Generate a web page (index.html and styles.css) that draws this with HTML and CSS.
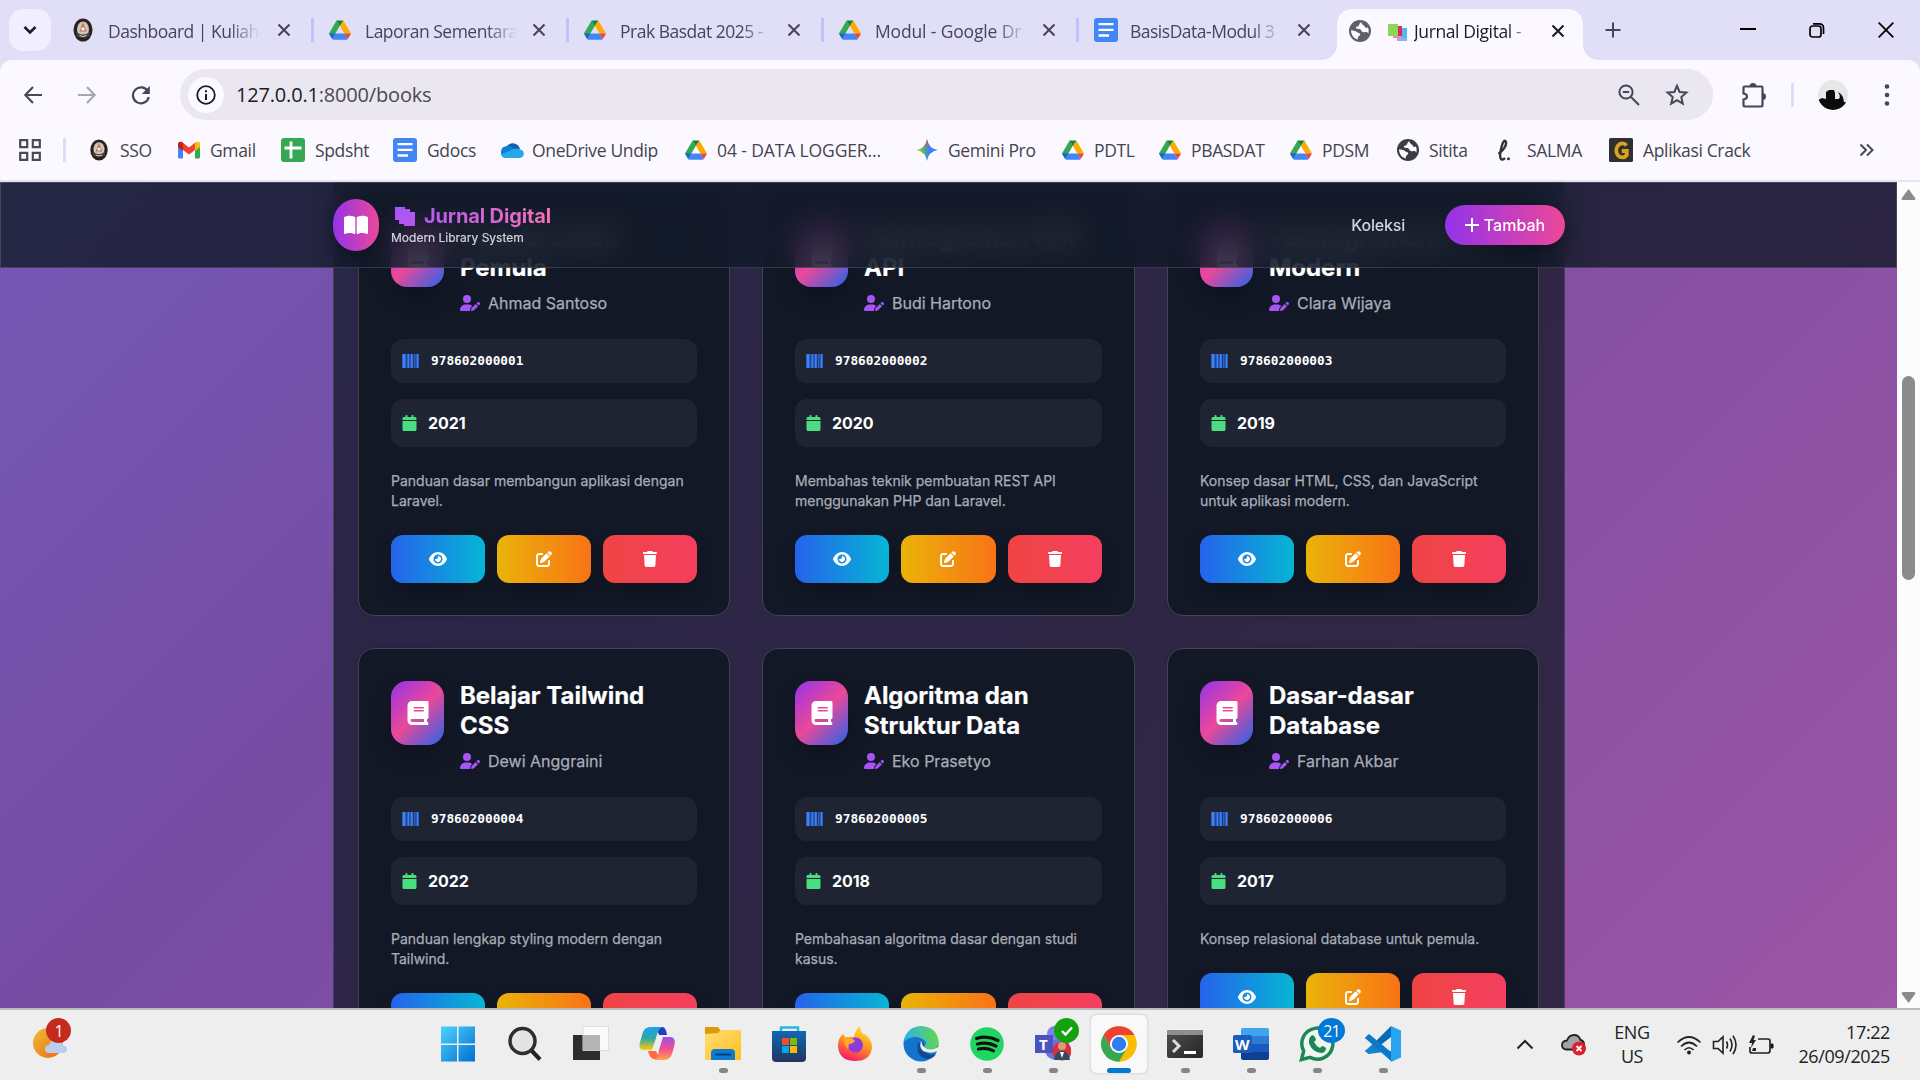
FILE: index.html
```html
<!DOCTYPE html>
<html lang="id">
<head>
<meta charset="utf-8">
<title>Jurnal Digital</title>
<link rel="stylesheet" href="styles.css">
</head>
<body>
<svg width="0" height="0" class="defs" aria-hidden="true">
  <defs>
    <linearGradient id="gWin" x1="0" y1="0" x2="1" y2="1"><stop offset="0" stop-color="#4fd3ff"/><stop offset="1" stop-color="#0070cf"/></linearGradient>
    <linearGradient id="gFolder" x1="0" y1="0" x2="1" y2="1"><stop offset="0" stop-color="#ffdf75"/><stop offset="1" stop-color="#ffbe1c"/></linearGradient>
    <linearGradient id="gStore" x1="0" y1="0" x2="0" y2="1"><stop offset="0" stop-color="#0f68b5"/><stop offset="1" stop-color="#22355d"/></linearGradient>
    <linearGradient id="gFox" x1=".7" y1="0" x2=".3" y2="1"><stop offset="0" stop-color="#ffe226"/><stop offset=".45" stop-color="#ff9a1f"/><stop offset="1" stop-color="#f5156c"/></linearGradient>
    <linearGradient id="gCopA" x1="0" y1="0" x2="0" y2="1"><stop offset="0" stop-color="#1ba3ee"/><stop offset=".5" stop-color="#2fa8a0"/><stop offset="1" stop-color="#ffcf0a"/></linearGradient>
    <linearGradient id="gCopB" x1="0" y1="0" x2="0" y2="1"><stop offset="0" stop-color="#9d50ef"/><stop offset=".5" stop-color="#ef4d8f"/><stop offset="1" stop-color="#ffa14e"/></linearGradient>
    <linearGradient id="gEdge" x1="0" y1=".5" x2="1" y2=".4"><stop offset="0" stop-color="#29b1ea"/><stop offset="1" stop-color="#62d84e"/></linearGradient>
    <linearGradient id="gGem" x1="0" y1=".5" x2="1" y2=".5"><stop offset="0" stop-color="#f5c41c"/><stop offset=".35" stop-color="#4fb070"/><stop offset=".6" stop-color="#3b84f6"/><stop offset="1" stop-color="#3b84f6"/></linearGradient>
    <linearGradient id="gSun" x1="0" y1="0" x2="1" y2="1"><stop offset="0" stop-color="#e9bf3e"/><stop offset="1" stop-color="#f3650b"/></linearGradient>
    <linearGradient id="gTerm" x1="0" y1="0" x2="1" y2="1"><stop offset="0" stop-color="#505050"/><stop offset="1" stop-color="#252525"/></linearGradient>
    <linearGradient id="gStack" x1="0" y1="0" x2="1" y2="1"><stop offset="0" stop-color="#a855f7"/><stop offset="1" stop-color="#b757ee"/></linearGradient>
  </defs>
  <symbol id="drive" viewBox="0 0 22 22"><path fill="#34a853" d="M7.6 1.5 0 14.5l3.2 5.6L11 6.5z"/><path fill="#188038" d="M7.6 1.5h6.8L11 7z"/><path fill="#fbab04" d="M14.4 1.5 22 14.5h-6.6L11 7z"/><path fill="#4285f4" d="M3.2 20.1 6.6 14.5h8.8l3.4 5.6-.9.6H4z"/><path fill="#1967d2" d="M0 14.5h6.6l-3.4 5.6z"/><path fill="#ea4335" d="M22 14.5h-6.6l3.4 5.6z"/></symbol>
  <symbol id="docs" viewBox="0 0 24 24"><rect width="24" height="24" rx="3" fill="#4285f4"/><path stroke="#fff" stroke-width="2.3" d="M4.500 6.200h15M4.500 11.800h15M4.500 17.500h10.500"/></symbol>
  <symbol id="seal" viewBox="0 0 20 24"><ellipse cx="10" cy="12" rx="9.500" ry="11.500" fill="#2a211e"/><ellipse cx="10" cy="11.500" rx="6" ry="8" fill="#cfc5bb"/><path d="M10 4l3.500 9.500h-7z" fill="#c27560"/><path d="M3.500 14q6.500 5 13 0v4q-6.500 4-13 0z" fill="#46403b"/><path d="M6.500 17.500q3.500 2 7 0" fill="none" stroke="#ddd" stroke-width="1"/><circle cx="10" cy="11" r="1.800" fill="#f4efe8"/></symbol>
  <symbol id="globe" viewBox="0 0 22 22"><circle cx="11" cy="11" r="11" fill="currentColor"/><path fill="#fbf9ff" d="M12.500 2.200c-1.800.6-2 1.800-2.600 3.200-.8 1.300-3 .6-3 2.300 0 1.500 2.600 1 3.900 1.300 1.800.6 1.300 2.600 2.800 3.100 1.600.4 2.800-.6 4.200 0 .9.500 1.100 1.200 1.400 1.600.6-2 .8-4.700-.5-6.500-.7 1-2.400.9-2.700-.3-.3-1.600-3.600-2.100-3.500-4.700zM2 10.200c1.800.3 4.600.4 6 1.800 1.200 1.300 2.900.8 3.200 2.300.2 1.500-1.800 1.700-2.200 3-.2.900-.3 1.700-.1 2.300C4.800 18.400 2 15 2 10.200z"/></symbol>
  <symbol id="x" viewBox="0 0 14 14"><path d="M1.500 1.500l11 11M12.500 1.500l-11 11" stroke="currentColor" stroke-width="2.100" fill="none"/></symbol>
  <symbol id="book" viewBox="0 0 448 512"><path fill="currentColor" d="M96 0C43 0 0 43 0 96V416c0 53 43 96 96 96H384h32c17.700 0 32-14.300 32-32s-14.300-32-32-32V384c17.700 0 32-14.300 32-32V32c0-17.700-14.300-32-32-32H384 96zm0 384H352v64H96c-17.700 0-32-14.300-32-32s14.300-32 32-32zm32-240c0-8.800 7.200-16 16-16H336c8.800 0 16 7.200 16 16s-7.200 16-16 16H144c-8.800 0-16-7.200-16-16zm16 48H336c8.800 0 16 7.200 16 16s-7.200 16-16 16H144c-8.800 0-16-7.200-16-16s7.200-16 16-16z"/></symbol>
  <symbol id="user" viewBox="0 0 640 512"><path fill="currentColor" d="M224 256A128 128 0 1 0 224 0a128 128 0 1 0 0 256zm-45.700 48C79.800 304 0 383.800 0 482.300C0 498.700 13.300 512 29.700 512H322.800c-3.100-8.800-3.700-18.400-1.400-27.800l15-60.100c2.800-11.300 8.600-21.500 16.800-29.700l40.300-40.300c-32.100-31-75.700-50.100-123.900-50.100H178.300zm435.500-68.300c-15.600-15.600-40.900-15.600-56.600 0l-29.400 29.400 71 71 29.400-29.400c15.600-15.600 15.600-40.900 0-56.600l-14.400-14.400zM375.900 417c-4.100 4.100-7 9.200-8.400 14.900l-15 60.100c-1.400 5.500 .2 11.200 4.200 15.200s9.700 5.600 15.200 4.200l60.100-15c5.600-1.400 10.800-4.300 14.900-8.400L576.100 358.700l-71-71L375.900 417z"/></symbol>
  <symbol id="bars" viewBox="0 0 17 14"><path fill="#2d5fc4" d="M0 0h17v14H0z"/><path fill="#3b82f6" d="M1 0h2v14H1zM6 0h1v14H6zM9 0h1.500v14H9zM15 0h1v14h-1z"/><path fill="#1f3156" d="M4.200 0h.5v14h-.5zM7.700 0h.5v14h-.5zM11.200 0h.8v14h-.8zM13.600 0h.5v14h-.5z"/></symbol>
  <symbol id="cal" viewBox="0 0 448 512"><path fill="currentColor" d="M96 32V64H48C21.500 64 0 85.500 0 112v48H448V112c0-26.500-21.500-48-48-48H352V32c0-17.700-14.300-32-32-32s-32 14.300-32 32V64H160V32c0-17.700-14.300-32-32-32S96 14.300 96 32zM448 192H0V464c0 26.500 21.500 48 48 48H400c26.500 0 48-21.500 48-48V192z"/></symbol>
  <symbol id="eye" viewBox="0 0 576 512"><path fill="currentColor" d="M288 32c-80.800 0-145.500 36.800-192.600 80.600C48.600 156 17.300 208 2.500 243.700c-3.300 7.900-3.300 16.700 0 24.600C17.300 304 48.600 356 95.400 399.400C142.500 443.200 207.200 480 288 480s145.500-36.800 192.600-80.600c46.800-43.500 78.100-95.400 93-131.100c3.300-7.900 3.300-16.700 0-24.600c-14.900-35.700-46.200-87.700-93-131.100C433.500 68.800 368.800 32 288 32zM144 256a144 144 0 1 1 288 0 144 144 0 1 1 -288 0zm144-64c0 35.300-28.700 64-64 64c-7.100 0-13.900-1.200-20.300-3.300c-5.500-1.800-11.900 1.600-11.700 7.400c.3 6.900 1.300 13.800 3.200 20.700c13.700 51.200 66.400 81.600 117.600 67.900s81.600-66.400 67.900-117.600c-11.100-41.500-47.800-69.400-88.600-71.100c-5.800-.2-9.200 6.100-7.400 11.700c2.100 6.400 3.300 13.200 3.300 20.300z"/></symbol>
  <symbol id="pen" viewBox="0 0 512 512"><path fill="currentColor" d="M471.600 21.700c-21.900-21.900-57.300-21.900-79.200 0L362.300 51.700l97.900 97.900 30.100-30.100c21.900-21.900 21.900-57.300 0-79.200L471.600 21.700zm-299.200 220c-6.100 6.100-10.800 13.600-13.500 21.900l-29.600 88.800c-2.900 8.600-.6 18.100 5.800 24.600s15.900 8.700 24.600 5.800l88.800-29.600c8.200-2.700 15.700-7.400 21.900-13.500L437.700 172.300 339.700 74.300 172.400 241.700zM96 64C43 64 0 107 0 160V416c0 53 43 96 96 96H352c53 0 96-43 96-96V320c0-17.700-14.300-32-32-32s-32 14.300-32 32v96c0 17.700-14.300 32-32 32H96c-17.700 0-32-14.300-32-32V160c0-17.700 14.300-32 32-32h96c17.700 0 32-14.300 32-32s-14.300-32-32-32H96z"/></symbol>
  <symbol id="trash" viewBox="0 0 448 512"><path fill="currentColor" d="M135.200 17.700L128 32H32C14.300 32 0 46.300 0 64S14.300 96 32 96H416c17.700 0 32-14.300 32-32s-14.300-32-32-32H320l-7.200-14.300C307.400 6.800 296.300 0 284.200 0H163.800c-12.100 0-23.200 6.800-28.600 17.700zM416 128H32L53.200 467c1.600 25.300 22.600 45 47.900 45H346.900c25.300 0 46.300-19.700 47.900-45L416 128z"/></symbol>
</svg>

<div class="tabstrip">
  <div class="tabmenu"><svg width="14" height="10" viewBox="0 0 14 10"><path d="M1.500 2l5.500 5.500L12.500 2" fill="none" stroke="#1c1b24" stroke-width="2.600"/></svg></div>
  <div class="tabs">
    <div class="tab"><svg class="fav"><use href="#seal"/></svg><span class="tt">Dashboard | Kuliah</span><svg class="cl"><use href="#x"/></svg></div>
    <div class="tab"><svg class="fav"><use href="#drive"/></svg><span class="tt">Laporan Sementara</span><svg class="cl"><use href="#x"/></svg></div>
    <div class="tab"><svg class="fav"><use href="#drive"/></svg><span class="tt">Prak Basdat 2025 -</span><svg class="cl"><use href="#x"/></svg></div>
    <div class="tab"><svg class="fav"><use href="#drive"/></svg><span class="tt wide">Modul - Google Dr</span><svg class="cl"><use href="#x"/></svg></div>
    <div class="tab last"><svg class="fav big"><use href="#docs"/></svg><span class="tt">BasisData-Modul 3</span><svg class="cl"><use href="#x"/></svg></div>
  </div>
  <div class="active-tab">
    <svg class="fav"><use href="#globe"/></svg>
    <svg class="emo" width="19" height="18" viewBox="0 0 19 18"><path fill="#52b8f2" d="M9 4h10v13H9z"/><path fill="#8cb3ef" d="M9 14h10v3H9z"/><path fill="#d62d5c" d="M5 2h9v12H5z"/><path fill="#ef8aa5" d="M5 12h9v2H5z"/><path fill="#8ed65a" d="M0 0h10v12H0z"/></svg>
    <span class="tt">Jurnal Digital -</span><svg class="cl"><use href="#x"/></svg>
  </div>
  <svg class="plus" width="16" height="16" viewBox="0 0 16 16"><path d="M8 .5v15M.5 8h15" stroke="#474559" stroke-width="2"/></svg>
  <div class="winbtns">
    <svg width="16" height="16" viewBox="0 0 16 16"><path d="M0 7h16" stroke="#000" stroke-width="2"/></svg>
    <svg width="16" height="16" viewBox="0 0 16 16"><rect x="1" y="4" width="11" height="11" rx="2.500" fill="none" stroke="#000" stroke-width="1.700"/><path d="M4 1.800h6.500a4 4 0 0 1 4 4V12" fill="none" stroke="#000" stroke-width="1.700"/></svg>
    <svg width="16" height="16" viewBox="0 0 16 16"><path d="M.7.7l14.600 14.600M15.300.7.7 15.300" stroke="#000" stroke-width="1.800"/></svg>
  </div>
</div>

<div class="chrome">
  <div class="toolbar">
    <div class="nav">
      <svg width="20" height="20" viewBox="0 0 20 20"><path d="M10 2 2.300 10 10 18M2.500 10H19" fill="none" stroke="#474559" stroke-width="2.100"/></svg>
      <svg width="20" height="20" viewBox="0 0 20 20"><path d="M10 2l7.700 8L10 18M17.500 10H1" fill="none" stroke="#a9a6b3" stroke-width="2.100"/></svg>
      <svg width="20" height="20" viewBox="0 0 20 20"><path d="M17 6.500A8 8 0 1 0 17.800 12" fill="none" stroke="#474559" stroke-width="2.200"/><path d="M18.800 1v8h-8z" fill="#474559"/></svg>
    </div>
    <div class="omni">
      <div class="info"><svg width="20" height="20" viewBox="0 0 20 20"><circle cx="10" cy="10" r="8.800" fill="none" stroke="#1d1b22" stroke-width="1.800"/><path d="M10 9v6M10 5.200v2" stroke="#1d1b22" stroke-width="2"/></svg></div>
      <span class="url"><b>127.0.0.1</b>:8000/books</span>
      <svg class="mag" width="22" height="22" viewBox="0 0 22 22"><circle cx="8" cy="8" r="6.600" fill="none" stroke="#474559" stroke-width="2"/><path d="M13 13l8 8M4.800 8h6.400" stroke="#474559" stroke-width="2"/></svg>
      <svg class="star" width="24" height="24" viewBox="0 0 24 24"><path d="M12 2.800l2.600 6.200 6.800.6-5.100 4.500 1.500 6.600L12 17.200l-5.800 3.500 1.500-6.600L2.600 9.600 9.400 9z" fill="none" stroke="#474559" stroke-width="2"/></svg>
    </div>
    <svg class="ext" width="26" height="26" viewBox="0 0 26 26"><path d="M2.500 5.500q0-1 1-1h17q1 0 1 1v18q0 1-1 1h-17q-1 0-1-1v-6q3.500-.5 3.500-3t-3.500-3z" fill="none" stroke="#474559" stroke-width="2.200"/><path d="M8.500 4.500a3.500 3.500 0 0 1 7 0zM21.500 11a3.500 3.500 0 0 1 0 7z" fill="#474559"/></svg>
    <i class="tsep"></i>
    <svg class="ava" width="30" height="30" viewBox="0 0 30 30"><clipPath id="cc"><circle cx="15" cy="15" r="15"/></clipPath><g clip-path="url(#cc)"><path fill="#e7e6e8" d="M0 0h30v30H0z"/><path fill="#0c0a0a" d="M0 20l4-2 4 1V12l3-2h5l1 3v6h4q2-3-1-7 5 2 6 10l4 1v7H0z"/></g></svg>
    <svg class="dots" width="6" height="22" viewBox="0 0 6 22"><g fill="#474559"><circle cx="3" cy="2.500" r="2.300"/><circle cx="3" cy="11" r="2.300"/><circle cx="3" cy="19.500" r="2.300"/></g></svg>
  </div>
  <div class="marks">
    <svg class="apps" width="22" height="22" viewBox="0 0 22 22"><path d="M1.200 1.200h7v7h-7zM13.800 1.200h7v7h-7zM1.200 13.800h7v7h-7zM13.800 13.800h7v7h-7z" fill="none" stroke="#4a4852" stroke-width="2.200"/></svg>
    <i></i>
    <div class="bm"><svg><use href="#seal"/></svg>SSO</div>
    <div class="bm"><svg viewBox="0 0 22 22"><path fill="#4285f4" d="M0 6h5v13.500H1.500Q0 19.500 0 18z"/><path fill="#34a853" d="M17 6h5v12q0 1.500-1.500 1.500H17z"/><path fill="#ea4335" d="M0 5q.5-3 4-2l7 5.500L18 3l-1 8-6 4.500L5 11z"/><path fill="#fbbc04" d="M17 3.800q5-2.500 5 1.200v3l-5 4z"/><path fill="#c5221f" d="M0 5q.5-3 4-2l1 1v8L0 8z"/></svg>Gmail</div>
    <div class="bm"><svg class="w"><rect width="24" height="24" rx="3" fill="#34a853"/><path stroke="#fff" stroke-width="2.800" d="M3.500 10h17M10 3.500v17"/></svg>Spdsht</div>
    <div class="bm"><svg class="w"><use href="#docs"/></svg>Gdocs</div>
    <div class="bm od-bm"><svg class="w" viewBox="0 0 24 24"><path fill="#0a64b4" d="M7 8a7.500 7.500 0 0 1 13 3l-6 6z"/><path fill="#0f80d7" d="M5.500 20A6 6 0 0 1 5 8.500q4-2 8 1.500l5 4z"/><path fill="#28a8ea" d="M5 20q-3-.5-4-3.500L14 11q3-1 5 0c7 1 6 9 0 9z"/></svg>OneDrive Undip</div>
    <div class="bm log"><svg><use href="#drive"/></svg>04 - DATA LOGGER...</div>
    <div class="bm"><svg viewBox="0 0 22 22"><path fill="url(#gGem)" d="M11 0q1.500 9.500 11 11-9.500 1.500-11 11-1.500-9.500-11-11 9.500-1.500 11-11z"/><path fill="#ef5350" opacity=".75" d="M11 0q.5 4 2.500 7h-5Q10.500 4 11 0z"/></svg>Gemini Pro</div>
    <div class="bm"><svg><use href="#drive"/></svg>PDTL</div>
    <div class="bm"><svg><use href="#drive"/></svg>PBASDAT</div>
    <div class="bm"><svg><use href="#drive"/></svg>PDSM</div>
    <div class="bm dark"><svg><use href="#globe"/></svg>Sitita</div>
    <div class="bm"><svg viewBox="0 0 22 22"><path d="M3.500 15Q12 8 11 3 9-1 6.500 8T6 20q2 1.500 4-1" fill="none" stroke="#333" stroke-width="2.400"/><circle cx="13.500" cy="19.800" r="1.500" fill="#333"/></svg>SALMA</div>
    <div class="bm"><svg class="w" viewBox="0 0 24 24"><rect width="24" height="24" rx="1.500" fill="#302f31"/><path d="M17.500 7.500A6 7 0 1 0 17.800 17v-4h-5" fill="none" stroke="#d9a41f" stroke-width="3.800"/></svg>Aplikasi Crack</div>
    <svg class="more" width="15" height="14" viewBox="0 0 15 14"><path d="M1.500 1.500 7 7l-5.500 5.500M8 1.500 13.500 7 8 12.500" fill="none" stroke="#474559" stroke-width="2"/></svg>
  </div>
</div>

<div class="view">
  <div class="page">
    <main class="panel">
      <article class="card">
        <div class="head"><div class="cover"><svg><use href="#book"/></svg></div><div><h3>Laravel untuk<br>Pemula</h3><p class="author"><svg><use href="#user"/></svg>Ahmad Santoso</p></div></div>
        <div class="isbn"><svg><use href="#bars"/></svg>978602000001</div>
        <div class="year"><svg><use href="#cal"/></svg>2021</div>
        <p class="desc">Panduan dasar membangun aplikasi dengan Laravel.</p>
        <div class="acts"><a class="v"><svg><use href="#eye"/></svg></a><a class="e"><svg><use href="#pen"/></svg></a><a class="d"><svg><use href="#trash"/></svg></a></div>
      </article>
      <article class="card">
        <div class="head"><div class="cover"><svg><use href="#book"/></svg></div><div><h3>Pemrograman PHP<br>API</h3><p class="author"><svg><use href="#user"/></svg>Budi Hartono</p></div></div>
        <div class="isbn"><svg><use href="#bars"/></svg>978602000002</div>
        <div class="year"><svg><use href="#cal"/></svg>2020</div>
        <p class="desc">Membahas teknik pembuatan REST API menggunakan PHP dan Laravel.</p>
        <div class="acts"><a class="v"><svg><use href="#eye"/></svg></a><a class="e"><svg><use href="#pen"/></svg></a><a class="d"><svg><use href="#trash"/></svg></a></div>
      </article>
      <article class="card">
        <div class="head"><div class="cover"><svg><use href="#book"/></svg></div><div><h3>Pemrograman Web<br>Modern</h3><p class="author"><svg><use href="#user"/></svg>Clara Wijaya</p></div></div>
        <div class="isbn"><svg><use href="#bars"/></svg>978602000003</div>
        <div class="year"><svg><use href="#cal"/></svg>2019</div>
        <p class="desc">Konsep dasar HTML, CSS, dan JavaScript untuk aplikasi modern.</p>
        <div class="acts"><a class="v"><svg><use href="#eye"/></svg></a><a class="e"><svg><use href="#pen"/></svg></a><a class="d"><svg><use href="#trash"/></svg></a></div>
      </article>
      <article class="card">
        <div class="head"><div class="cover"><svg><use href="#book"/></svg></div><div><h3>Belajar Tailwind<br>CSS</h3><p class="author"><svg><use href="#user"/></svg>Dewi Anggraini</p></div></div>
        <div class="isbn"><svg><use href="#bars"/></svg>978602000004</div>
        <div class="year"><svg><use href="#cal"/></svg>2022</div>
        <p class="desc">Panduan lengkap styling modern dengan Tailwind.</p>
        <div class="acts"><a class="v"><svg><use href="#eye"/></svg></a><a class="e"><svg><use href="#pen"/></svg></a><a class="d"><svg><use href="#trash"/></svg></a></div>
      </article>
      <article class="card">
        <div class="head"><div class="cover"><svg><use href="#book"/></svg></div><div><h3>Algoritma dan<br>Struktur Data</h3><p class="author"><svg><use href="#user"/></svg>Eko Prasetyo</p></div></div>
        <div class="isbn"><svg><use href="#bars"/></svg>978602000005</div>
        <div class="year"><svg><use href="#cal"/></svg>2018</div>
        <p class="desc">Pembahasan algoritma dasar dengan studi kasus.</p>
        <div class="acts"><a class="v"><svg><use href="#eye"/></svg></a><a class="e"><svg><use href="#pen"/></svg></a><a class="d"><svg><use href="#trash"/></svg></a></div>
      </article>
      <article class="card">
        <div class="head"><div class="cover"><svg><use href="#book"/></svg></div><div><h3>Dasar-dasar<br>Database</h3><p class="author"><svg><use href="#user"/></svg>Farhan Akbar</p></div></div>
        <div class="isbn"><svg><use href="#bars"/></svg>978602000006</div>
        <div class="year"><svg><use href="#cal"/></svg>2017</div>
        <p class="desc">Konsep relasional database untuk pemula.</p>
        <div class="acts"><a class="v"><svg><use href="#eye"/></svg></a><a class="e"><svg><use href="#pen"/></svg></a><a class="d"><svg><use href="#trash"/></svg></a></div>
      </article>
    </main>
    <header class="top">
      <div class="logo"><svg width="24" height="22" viewBox="0 0 576 512"><path fill="#fff" d="M249.600 471.500c10.800 3.800 22.400-4.100 22.400-15.500V78.600c0-4.200-1.600-8.400-5-11C247.400 52 202.400 32 144 32C93.500 32 46.300 45.300 18.100 56.100C6.800 60.500 0 71.700 0 83.800V454.100c0 11.900 12.800 20.200 24.100 16.500C55.600 460.100 105.500 448 144 448c33.900 0 79 14 105.600 23.500zm76.800 0C353 462 398.100 448 432 448c38.500 0 88.400 12.100 119.900 22.600c11.300 3.800 24.100-4.600 24.100-16.500V83.800c0-12.100-6.800-23.300-18.100-27.600C529.700 45.300 482.500 32 432 32c-58.400 0-103.400 20-123 35.600c-3.300 2.600-5 6.800-5 11V456c0 11.400 11.700 19.300 22.400 15.500z"/></svg></div>
      <div class="brand">
        <div class="name"><svg width="20" height="19" viewBox="0 0 20 19"><path fill="url(#gStack)" d="M0 0h10v2h5v3h5v14H9v-2H4v-4H0z"/></svg><span>Jurnal Digital</span></div>
        <div class="sub">Modern Library System</div>
      </div>
      <nav class="links"><span class="kol">Koleksi</span><a class="add"><svg width="14" height="14" viewBox="0 0 14 14"><path d="M7 0v14M0 7h14" stroke="#fff" stroke-width="2"/></svg>Tambah</a></nav>
    </header>
  </div>
  <div class="scroll">
    <svg width="15" height="11" viewBox="0 0 15 11"><path d="M7.500 0 14.500 9.500q0 1.500-1.500 1.500H2Q.5 11 .5 9.500z" fill="#8b8b8b"/></svg>
    <div class="thumb"></div>
    <svg width="15" height="11" viewBox="0 0 15 11"><path d="M7.500 11 .5 1.500Q.5 0 2 0h11q1.500 0 1.500 1.500z" fill="#8b8b8b"/></svg>
  </div>
</div>

<footer class="taskbar">
  <div class="weather"><svg width="36" height="36" viewBox="0 0 36 36"><circle cx="15" cy="20" r="15" fill="url(#gSun)"/><path d="M16 30q-4 0-4-4t4-4q2-6 8-5 5 0 6 5 4 1 4 4 0 4-4 4z" fill="#b8cdf0"/></svg><em class="badge red">1</em></div>
  <div class="icons">
    <div class="ic"><svg viewBox="0 0 36 36"><path fill="url(#gWin)" d="M1 .5h16v17H1zM18.500.5h16.500v17H18.500zM1 19h16v16.500H1zM18.500 19h16.500v16.500H18.500z"/></svg></div>
    <div class="ic"><svg viewBox="0 0 36 36"><path d="M24 24l9 9.500" stroke="#222" stroke-width="4"/><circle cx="15.500" cy="15" r="12.500" fill="#e2e4e6" stroke="#2e2e2e" stroke-width="3.500"/></svg></div>
    <div class="ic"><svg viewBox="0 0 36 36"><path fill="#2d2d2d" d="M0 9h27v25H0z"/><path fill="#fafafa" stroke="#ddd" d="M10 .5h25.500v24H10z"/><path fill="#b4b4b4" d="M10 9h17v15.500H10z"/></svg></div>
    <div class="ic"><svg viewBox="0 0 36 36"><path fill="#2140c0" d="M17 1h7q3 1 4 8h-8z"/><path fill="url(#gCopA)" d="M12 1h11q-4 2-6 11l-4 12H4q-5-1-3-8l3-10q2-5 8-5z"/><path fill="#ff6a45" d="M9 25h8l4 8h-6q-4 0-6-8z"/><path fill="url(#gCopB)" d="M24 34H15q4-2 5-10l4-13h8q5 1 3.500 8L33 28q-2 6-9 6z"/></svg></div>
    <div class="ic"><svg viewBox="0 0 36 36"><path fill="#dd9a06" d="M0 1h13l3 4v6H0z"/><path fill="url(#gFolder)" d="M0 8l13-1 3-3h18q2 0 2 2v28H0z"/><path fill="#0d7bcb" d="M6 34v-7q0-4 4-4h16q4 0 4 4v7z"/><path stroke="#083f78" stroke-width="2" d="M10 28.500h16"/></svg><s></s></div>
    <div class="ic"><svg viewBox="0 0 36 36"><path d="M10 8V1.500h17V8" fill="none" stroke="#25b7ea" stroke-width="2.500"/><path fill="url(#gStore)" d="M1 5h34v27q0 4-4 4H5q-4 0-4-4z"/><path fill="#f25022" d="M11 12h7v7h-7z"/><path fill="#7fba00" d="M19 12h7v7h-7z"/><path fill="#00a4ef" d="M11 20h7v7h-7z"/><path fill="#ffb900" d="M19 20h7v7h-7z"/></svg></div>
    <div class="ic"><svg viewBox="0 0 36 36"><path fill="url(#gFox)" d="M1 20q0-8 5-12l3 4q5-2 8-1 1-7 6-11 0 5 4 9l1-1q7 6 7 13-1 14-17 14T1 20z"/><circle cx="18.500" cy="19" r="7.500" fill="#8a3bdc"/><path fill="#ffa62b" d="M6 12q7-3 12 3-2 3-6 3l-1 5q-4-4-5-11z"/></svg></div>
    <div class="ic"><svg viewBox="0 0 36 36"><circle cx="18" cy="18" r="17.500" fill="#1473cc"/><path fill="url(#gEdge)" d="M1 15Q4 0 19 .500 35 1 35.500 17q-1 7-8 7-7 0-6-4 4-5-4-8-8-3-16 3z"/><path fill="#0d4c93" d="M15 17q-3 14 9 16 6 0 9-5-5 2-10-1-4-4-2-9z"/><path fill="#eee" d="M18 15q-3 9 5 11 7 2 11-1l2 1-1-5q-8 5-14 0-2-2-3-6z"/></svg><s></s></div>
    <div class="ic"><svg viewBox="0 0 36 36"><circle cx="18" cy="18" r="16.800" fill="#1ed760"/><path d="M7.500 12.500q11-3.500 21.500 2M8.500 18q10-2.500 18.500 2M9.500 23q8-2 15 1.800" fill="none" stroke="#111" stroke-width="3.200" stroke-linecap="round"/></svg><s></s></div>
    <div class="ic"><svg viewBox="0 0 36 36"><circle cx="20" cy="8" r="8" fill="#7b83eb"/><path fill="#6a72dc" d="M10 14h24v12q-3 8-12 8t-12-8z"/><path fill="#4b53bc" d="M0 9h18v18H0z"/><circle cx="27" cy="25" r="9.500" fill="#d8303a"/><path fill="#304b60" d="M19 34q1-9 8-9t8 9z"/><circle cx="27" cy="20" r="4" fill="#d89b80"/><path fill="#fff" d="M25 26h4l-2 6z"/></svg><b class="tl">T</b><em class="badge green"><svg width="14" height="12" viewBox="0 0 14 12"><path d="M2 6l3.500 3.500L12 2.500" fill="none" stroke="#fff" stroke-width="2.400"/></svg></em><s></s></div>
    <div class="ic on"><svg viewBox="0 0 36 36"><circle cx="18" cy="18" r="17.800" fill="#fbbc04"/><path fill="#ea4335" d="M2.600 9A17.800 17.800 0 0 1 33.400 9H18L10.200 22.500z"/><path fill="#34a853" d="M2.600 9A17.800 17.800 0 0 0 18 35.800L25.800 22.500 10.200 22.500z"/><circle cx="18" cy="18" r="9" fill="#fff"/><circle cx="18" cy="18" r="7.200" fill="#2f7cf0"/></svg><s></s></div>
    <div class="ic"><svg viewBox="0 0 36 36"><rect y="4" width="36" height="28" rx="2" fill="url(#gTerm)"/><path fill="#8e8e8e" d="M0 9V6q0-2 2-2h32q2 0 2 2v3z"/><path d="M6 14l6 6-6 6" fill="none" stroke="#ddd" stroke-width="3"/><path d="M17 26.500h12" stroke="#fff" stroke-width="3"/></svg><s></s></div>
    <div class="ic"><svg viewBox="0 0 36 36"><path fill="#41a5ee" d="M8 4q0-2 2-2h24q2 0 2 2v7H8z"/><path fill="#2b7cd3" d="M8 10h28v8H8z"/><path fill="#185abd" d="M8 18h28v8H8z"/><path fill="#103f91" d="M8 26h28v6q0 2-2 2H10q-2 0-2-2z"/><rect y="9" width="19" height="18" rx="1.500" fill="#1a5dbe"/></svg><b class="tl wd">W</b><s></s></div>
    <div class="ic"><svg viewBox="0 0 36 36"><path d="M2.500 33.500l2.200-8.500A15.500 15.500 0 1 1 11 31.300z" fill="#f1f5f2" stroke="#1b8755" stroke-width="3.500"/><path fill="#1b8755" d="M12 10q2-2 4 1l1 3-2 2q2 4 6 6l2-2q4 1 4 3-1 4-5 4-9-1-12-10-.500-5 2-7z"/></svg><em class="badge blue">21</em><s></s></div>
    <div class="ic"><svg viewBox="0 0 36 36"><path fill="#0a6ab6" d="M0 12l3-3 8 6 15-15v11L4 28l-4-3 9-7z"/><path fill="#1484cd" d="M0 25l11-10 15 20v-10L4 28z"/><path fill="#0a7ac8" d="M4 8l22 18v9L0 12z"/><path fill="#27a5f2" d="M26 0l10 4.500v27L26 36z"/></svg><s></s></div>
  </div>
  <div class="tray">
    <svg width="18" height="11" viewBox="0 0 18 11"><path d="M1.500 9.500 9 2l7.500 7.500" fill="none" stroke="#222" stroke-width="2"/></svg>
    <svg class="od" width="26" height="24" viewBox="0 0 26 24"><path d="M5 16.500q-4-.5-4-4.500t5-4.500Q8 2 13 2q5 0 6.500 5 2 0 3.500 3v6.500z" fill="#a3a3a3" stroke="#222" stroke-width="1.800"/><circle cx="18" cy="15.500" r="7" fill="#dc1f2e"/><path d="M15.500 13l5 5M20.500 13l-5 5" stroke="#fff" stroke-width="1.800"/></svg>
    <div class="lang">ENG<br>US</div>
    <svg class="wifi" width="26" height="20" viewBox="0 0 26 20"><path d="M1.500 7.500q11.500-11 23 0M5 11.500q8-8 16 0M8.500 15q4.500-4.500 9 0" fill="none" stroke="#222" stroke-width="1.700"/><circle cx="13" cy="17.500" r="2" fill="#222"/></svg>
    <svg class="spk" width="26" height="20" viewBox="0 0 26 20"><path d="M1.500 6.500H6l5-4.700v16.400l-5-4.700H1.500zM14.500 6.500q2 3.500 0 7M18 3.500q4 6.500 0 13M21 .800q6 9.200 0 18.400" fill="none" stroke="#222" stroke-width="1.600"/></svg>
    <svg class="bat" width="26" height="20" viewBox="0 0 26 20"><path d="M10 4h10q2 0 2 2v9q0 3-2 3H4q-2 0-2-2v-4" fill="none" stroke="#222" stroke-width="1.700"/><path d="M23 9h2v4h-2z" stroke="#222"/><path d="M5 0 1 8h3l-1 5 5-8H5.500L7 1zM5 13h3v3H4z" fill="#222"/></svg>
    <div class="clock">17:22<br>26/09/2025</div>
  </div>
</footer>
</body>
</html>
```

FILE: styles.css
```css
* { box-sizing: border-box; }
body { margin: 0; width: 1920px; height: 1080px; overflow: hidden; display: flex; flex-direction: column; font-family: "Open Sans", "Noto Sans", sans-serif; color: #474559; background: #e0dff7; }
.defs { position: absolute; }
svg { display: block; flex: none; }
h3, p { margin: 0; }

/* tab strip */
.tabstrip { height: 60px; flex: none; display: flex; padding-left: 9px; background: #e0dff7; }
.tabmenu { width: 42px; height: 42px; margin-top: 9px; border-radius: 14px; background: #f0eeff; display: grid; place-items: center; }
.tabs { display: flex; margin-left: 8px; }
.tab { width: 255px; height: 24px; margin-top: 18px; display: flex; align-items: center; padding-left: 15px; border-right: 3px solid #c3c1fb; }
.tab:first-child { padding-left: 13px; }
.tab:first-child .cl { margin-left: 17px; }
.tab.last { border-right: 0; }
.fav { width: 22px; height: 24px; }
.fav.big { width: 24px; }
.tt { font-size: 17.5px; letter-spacing: -.5px; line-height: 24px; margin: 1px 0 0 14px; width: 152px; overflow: hidden; white-space: nowrap; -webkit-mask-image: linear-gradient(90deg, #000 80%, transparent 100%); mask-image: linear-gradient(90deg, #000 80%, transparent 100%); }
.tt.wide { letter-spacing: -.15px; }
.big + .tt { width: 152px; margin-left: 12px; }
.cl { width: 14px; height: 14px; margin-left: 15px; }
.active-tab { position: relative; width: 246px; height: 51px; margin: 9px 0 0 3px; padding: 0 0 0 12px; border-radius: 15px 15px 0 0; background: #fbf9ff; display: flex; align-items: center; }
.active-tab::before, .active-tab::after { content: ""; position: absolute; bottom: 0; width: 15px; height: 15px; }
.active-tab::before { left: -15px; background: radial-gradient(circle at 0 0, transparent 14.5px, #fbf9ff 15px); }
.active-tab::after { right: -15px; background: radial-gradient(circle at 100% 0, transparent 14.5px, #fbf9ff 15px); }
.active-tab .fav { color: #5e6066; }
.active-tab .fav, .active-tab .cl { margin-bottom: 8px; }
.emo { margin: -4px 0 0 17px; }
.active-tab .tt { width: 118px; margin: -8px 0 0 7px; color: #1c1b22; letter-spacing: -.4px; }
.active-tab .cl { margin-left: 19px; color: #1c1b22; }
.plus { margin: 22px 0 0 22px; }
.winbtns { display: flex; gap: 53px; margin: 22px 0 0 119px; }

/* toolbar */
.chrome { height: 122px; flex: none; background: #fbf9ff; border-radius: 12px 12px 0 0; border-bottom: 2px solid #e6e3f0; }
.toolbar { display: flex; align-items: center; height: 51px; margin-top: 9px; padding-left: 23px; }
.nav { display: flex; gap: 34px; width: 157px; }
.omni { width: 1533px; height: 51px; border-radius: 26px; background: #eae7f1; display: flex; align-items: center; padding-left: 8px; }
.info { width: 36px; height: 36px; border-radius: 50%; background: #fbf9ff; display: grid; place-items: center; }
.url { flex: 1; margin-left: 12px; font-size: 20px; letter-spacing: -.18px; color: #4a4855; }
.url b { font-weight: 400; color: #1c1b22; }
.mag { margin-right: 25px; }
.star { margin-right: 24px; }
.ext { margin-left: 28px; }
.tsep { width: 3px; height: 24px; margin-left: 24px; background: #dedcfb; }
.ava { margin-left: 24px; }
.dots { margin-left: 36px; }
.marks { display: grid; height: 60px; align-items: center; padding: 0 0 1px 19px; grid-template-columns: 44px 25px 90px 103px 112px 107px 185px 231px 146px 97px 131px 107px 98px 114px 250px 20px; font-size: 17.5px; letter-spacing: -.35px; color: #45434f; }
.marks i { width: 3px; height: 24px; background: #dedcfb; }
.bm { display: flex; align-items: center; white-space: nowrap; gap: 10px; }
.bm svg { width: 22px; height: 22px; }
.bm svg.w { width: 24px; height: 24px; }
.od-bm { gap: 8px; }
.log { letter-spacing: -.12px; }
.dark svg { color: #3b3c41; }

/* browser viewport */
.view { height: 826px; flex: none; display: flex; }
.page { width: 1897px; height: 826px; overflow: hidden; display: grid; grid-template: 826px / 1897px; background: linear-gradient(135deg, #7359b5 0%, #764ca3 32%, #8650a3 63%, #9c56a5 100%); font-family: Inter, "Open Sans", sans-serif; }
.scroll { width: 23px; background: #fcfcfc; display: flex; flex-direction: column; align-items: center; padding: 7px 0 5px; }
.thumb { width: 13px; height: 204px; margin: 176px 0 auto; border-radius: 7px; background: #8b8b8b; }
.top { grid-area: 1 / 1; z-index: 2; height: 86px; display: flex; align-items: center; padding: 0 331px 1px 332px; border: 1px solid rgba(255,255,255,.14); background: rgba(18,25,40,.8); backdrop-filter: blur(16px); }
.logo { width: 46px; height: 52px; border-radius: 23px / 24px; background: linear-gradient(90deg, #9333ea, #ec4899); display: grid; place-items: center; box-shadow: 0 8px 14px rgba(0,0,0,.25); }
.brand { margin-left: 12px; padding-bottom: 0; }
.name { display: flex; align-items: center; gap: 9px; margin-left: 4px; font-size: 20px; line-height: 26px; }
.name span { background: linear-gradient(90deg, #b45bf0, #f472b6); -webkit-background-clip: text; background-clip: text; color: transparent; letter-spacing: -.15px; font-weight: 700; }
.sub { font-size: 12px; line-height: 17px; color: #d1d5db; -webkit-text-stroke: .2px #d1d5db; }
.links { margin-left: auto; display: flex; align-items: center; font-size: 16px; font-weight: 500; color: #d1d5db; }
.kol { font-weight: 500; letter-spacing: -.2px; }
.add { width: 120px; height: 40px; margin-left: 40px; border-radius: 20px; background: linear-gradient(90deg, #9333ea, #ec4899); color: #fff; display: flex; align-items: center; justify-content: center; gap: 5px; box-shadow: 0 8px 14px rgba(0,0,0,.25); }

.panel { grid-area: 1 / 1; width: 1232px; height: 1100px; margin-left: 333px; padding: 8px 24px; border: solid rgba(255,255,255,.12); border-width: 0 1px; background: rgba(18,24,38,.74); display: grid; grid-template-columns: 372px 373px 372px; grid-template-rows: 426px 426px; column-gap: 32px; row-gap: 32px; }
.card { padding: 32px; border: 1px solid #42444f; border-radius: 16px; background: #131827; box-shadow: 0 0 3px rgba(0,0,0,.12); }
.head { display: flex; gap: 16px; height: 92px; margin-bottom: 24px; }
.cover { width: 53px; height: 64px; flex: none; border-radius: 16px; background: linear-gradient(135deg, #9333ea 0%, #ec4899 50%, #2563eb 100%); color: #fff; display: grid; place-items: center; box-shadow: 0 10px 18px rgba(0,0,0,.22); }
.cover svg { width: 22px; height: 24px; }
h3 { font-size: 24px; line-height: 30px; font-weight: 700; color: #fff; white-space: nowrap; letter-spacing: -.03px; -webkit-text-stroke: .2px #fff; }
.author { display: flex; align-items: center; gap: 8px; margin-top: 8px; font-size: 16px; line-height: 24px; color: #a9adb6; -webkit-text-stroke: .25px #a9adb6; }
.author svg { width: 20px; height: 16px; color: #a855f7; }
.isbn, .year { display: flex; align-items: center; padding-left: 11px; border-radius: 12px; background: #1f2433; color: #fff; }
.isbn { height: 44px; gap: 12px; margin-bottom: 16px; padding-bottom: 1px; font: 700 12.8px "DejaVu Sans Mono", monospace; }
.isbn svg { width: 17px; height: 14px; }
.year { height: 48px; gap: 11px; font-size: 16px; font-weight: 700; letter-spacing: -.1px; }
.year svg { width: 15px; height: 16px; color: #4ade80; }
.desc { margin: 24px 0; font-size: 14px; line-height: 20px; color: #a9adb6; -webkit-text-stroke: .25px #a9adb6; }
.acts { display: grid; grid-template-columns: repeat(3, 1fr); gap: 12px; }
.acts a { height: 48px; border-radius: 12px; display: grid; place-items: center; color: #fff; box-shadow: 0 10px 16px rgba(0,0,0,.2); }
.acts svg { width: 18px; height: 16px; }
.v { background: linear-gradient(90deg, #2563eb, #06b6d4); }
.e { background: linear-gradient(90deg, #eab308, #f97316); }
.d { background: linear-gradient(90deg, #ef4444, #f43f5e); }

/* taskbar */
.taskbar { height: 72px; flex: none; display: flex; background: #eee; border-top: 2px solid #bbb; color: #222; }
.weather { position: relative; width: 391px; padding: 13px 0 0 33px; }
.badge { position: absolute; width: 25px; height: 25px; border-radius: 50%; display: grid; place-items: center; color: #fff; font-style: normal; font-size: 16px; line-height: 1; letter-spacing: -1px; }
.red { left: 46px; top: 8px; background: #c42b1c; }
.green { right: 2px; top: 3px; background: #13a10e; }
.blue { right: 0; top: 3px; background: #0078d4; width: 27px; }
.icons { display: flex; gap: 10px; margin-top: 5px; padding-left: 39px; }
.ic { position: relative; width: 56px; height: 58px; padding: 11px 10px; border-radius: 6px; }
.ic > svg { width: 36px; height: 36px; }
.ic s { position: absolute; left: 24px; bottom: 0; width: 9px; height: 5px; border-radius: 3px; background: #868686; }
.ic.on { background: #f9f9f9; box-shadow: 0 0 0 1.500px #e0e0e0; }
.ic.on s { left: 16px; width: 24px; background: #0078d4; }
.ic:nth-child(n+2) { left: 1px; }
.tl { position: absolute; left: 14px; top: 20px; font-size: 15px; line-height: 18px; color: #fff; font-weight: 700; }
.wd { left: 12px; }
.tray { display: flex; align-items: center; margin-left: auto; padding-right: 30px; height: 69px; font-size: 18px; line-height: 23.500px; letter-spacing: -.4px; }
.od { margin-left: 27px; }
.lang { width: 60px; margin-left: 15px; text-align: center; }
.wifi { margin-left: 14px; }
.spk, .bat { margin-left: 10px; }
.clock { width: 116px; text-align: right; white-space: nowrap; }
```
